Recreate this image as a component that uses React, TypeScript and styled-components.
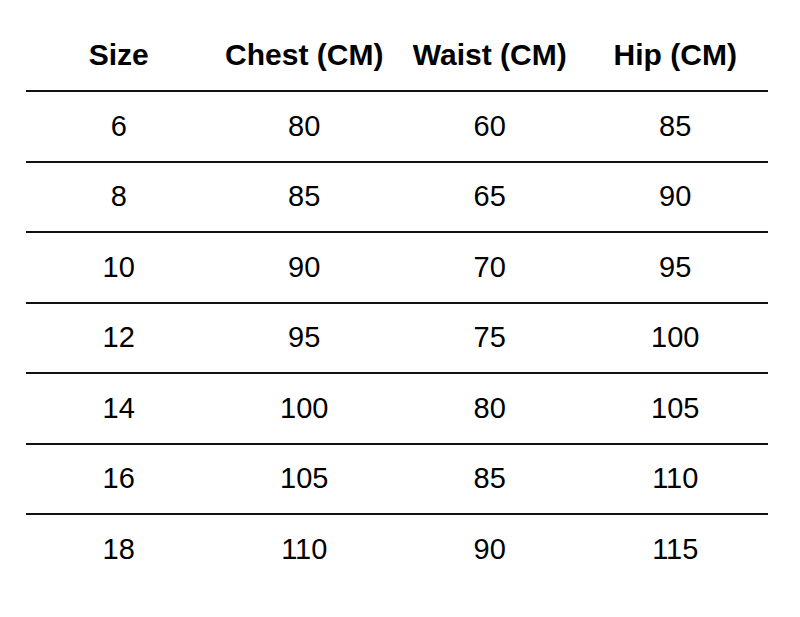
import React from "react";
import styled, { createGlobalStyle } from "styled-components";

const Global = createGlobalStyle`
  html, body { margin: 0; padding: 0; background: #ffffff; }
  body { font-family: "Liberation Sans", Arial, sans-serif; color: #000; }
`;

const Page = styled.div`
  width: 800px;
  height: 617px;
  padding: 20px 0 0 26px;
  box-sizing: border-box;
`;

const Table = styled.table`
  width: 742px;
  border-collapse: collapse;
  table-layout: fixed;
`;

const HeadCell = styled.th`
  height: 70px;
  padding: 0;
  font-size: 30px;
  font-weight: 700;
  text-align: center;
  vertical-align: middle;
  border-bottom: 2px solid #111;
`;

const Row = styled.tr`
  height: 70.5px;
  & + & > td {
    border-top: 2px solid #111;
  }
`;

const Cell = styled.td`
  padding: 0;
  font-size: 29px;
  text-align: center;
  vertical-align: middle;
`;

const headers = ["Size", "Chest (CM)", "Waist (CM)", "Hip (CM)"];
const rows = [
  [6, 80, 60, 85],
  [8, 85, 65, 90],
  [10, 90, 70, 95],
  [12, 95, 75, 100],
  [14, 100, 80, 105],
  [16, 105, 85, 110],
  [18, 110, 90, 115],
];

export default function App() {
  return (
    <>
      <Global />
      <Page>
        <Table>
          <thead>
            <tr>
              {headers.map((h) => (
                <HeadCell key={h}>{h}</HeadCell>
              ))}
            </tr>
          </thead>
          <tbody>
            {rows.map((r) => (
              <Row key={r[0]}>
                {r.map((v, i) => (
                  <Cell key={i}>{v}</Cell>
                ))}
              </Row>
            ))}
          </tbody>
        </Table>
      </Page>
    </>
  );
}
